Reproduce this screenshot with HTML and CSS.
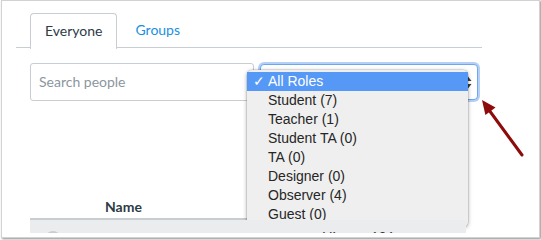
FILE: index.html
```html
<!DOCTYPE html>
<html>
<head>
<meta charset="utf-8">
<link rel="stylesheet" href="styles.css">
</head>
<body>
<div class="shot">
  <div class="tabs">
    <div class="tab active">Everyone</div>
    <div class="tab link">Groups</div>
  </div>
  <div class="main">
    <div class="filters">
      <div class="search">Search people</div>
      <div class="select-wrap">
        <div class="select">
          <svg class="updown" width="8" height="13" viewBox="0 0 8 13"><path d="M4 0.5 L7.5 5 L0.5 5 Z M4 12.5 L7.5 8 L0.5 8 Z" fill="#3a3a3a"/></svg>
        </div>
        <ul class="menu">
          <li class="sel"><span class="check">✓</span>All Roles</li>
          <li>Student (7)</li>
          <li>Teacher (1)</li>
          <li>Student TA (0)</li>
          <li>TA (0)</li>
          <li>Designer (0)</li>
          <li>Observer (4)</li>
          <li>Guest (0)</li>
        </ul>
      </div>
    </div>
    <div class="table">
      <div class="thead">Name</div>
      <div class="trow"><span class="avatar"></span><span class="course">History 101</span></div>
    </div>
  </div>
</div>
<svg class="annot" width="541" height="240" viewBox="0 0 541 240">
  <line x1="489" y1="110" x2="522" y2="155" stroke="#8e0b0b" stroke-width="3" stroke-linecap="round"/>
  <polygon points="482,100 485.4,115 495.5,107.6" fill="#8e0b0b"/>
</svg>
</body>
</html>
```

FILE: styles.css
```css
html, body {
  margin: 0;
  padding: 0;
  background: #fff;
}
body {
  width: 541px;
  height: 240px;
  position: relative;
  overflow: hidden;
  font-family: Lato, "Liberation Sans", sans-serif;
}
.shot {
  margin-left: 1px;
  width: 537px;
  border: 1px solid #d2d2d2;
  box-shadow: 1px 1px 2px rgba(0, 0, 0, 0.45);
  background: #fff;
  padding-top: 12px;
  box-sizing: content-box;
  height: 224px;
  overflow: hidden;
}
.tabs {
  margin-left: 14px;
  width: 466px;
  padding-left: 14px;
  display: flex;
  gap: 2px;
  border-bottom: 1px solid #c7cdd1;
  height: 35px;
  box-sizing: border-box;
}
.tab {
  height: 35px;
  box-sizing: border-box;
  font-size: 14px;
  line-height: 34px;
  color: #2d3b45;
}
.tab.active {
  border: 1px solid #c7cdd1;
  border-bottom: none;
  border-radius: 4px 4px 0 0;
  background: #fff;
  padding: 0 14px;
  height: 36px;
}
.tab.link {
  color: #1b8fe3;
  padding: 0 18px 0 16px;
}
.main {
  margin-left: 28px;
}
.filters {
  margin-top: 15px;
  display: flex;
  align-items: flex-start;
}
.search {
  width: 224px;
  height: 38px;
  box-sizing: border-box;
  border: 1px solid #c7cdd1;
  border-radius: 3px;
  padding-left: 8px;
  font-size: 14px;
  line-height: 36px;
  color: #8b969e;
}
.select-wrap {
  position: relative;
  margin-left: 6px;
  margin-top: 1px;
}
.select {
  width: 218px;
  height: 36px;
  box-sizing: border-box;
  border: 1px solid #6fa7ee;
  border-radius: 4px;
  box-shadow: 0 0 0 2px rgba(120, 170, 240, 0.55);
  background: #fff;
  display: flex;
  align-items: center;
  justify-content: flex-end;
  padding-right: 5px;
}
.updown {
  display: block;
}
.menu {
  position: absolute;
  left: -13px;
  top: 6px;
  width: 221px;
  margin: 0;
  padding: 2px 0 3px;
  list-style: none;
  background: #efefef;
  border-radius: 5px;
  box-shadow: 0 1px 4px rgba(0, 0, 0, 0.35), 0 0 0 0.5px rgba(0, 0, 0, 0.15);
  font-family: "Liberation Sans", Arial, sans-serif;
  font-size: 14px;
  color: #262626;
}
.menu li {
  height: 19px;
  line-height: 19px;
  padding-left: 21px;
  position: relative;
}
.menu li.sel {
  background: #5598f6;
  color: #fff;
}
.check {
  position: absolute;
  left: 6px;
  top: 0;
}
.table {
  margin-top: 94px;
  width: 436px;
}
.thead {
  line-height: 24px;
  padding-left: 75px;
  font-size: 14px;
  font-weight: bold;
  color: #2d3b45;
  border-bottom: 2px solid #c7cdd1;
  box-sizing: border-box;
  height: 25px;
}
.trow {
  height: 13px;
  background: #ebeced;
  overflow: hidden;
  position: relative;
  font-size: 14px;
  color: #2d3b45;
}
.avatar {
  position: absolute;
  left: 15px;
  top: 11px;
  width: 16px;
  height: 16px;
  border-radius: 50%;
  background: #c8ccd0;
}
.course {
  position: absolute;
  left: 292px;
  top: 9px;
  line-height: 16px;
}
.annot {
  position: absolute;
  left: 0;
  top: 0;
  pointer-events: none;
}
```
